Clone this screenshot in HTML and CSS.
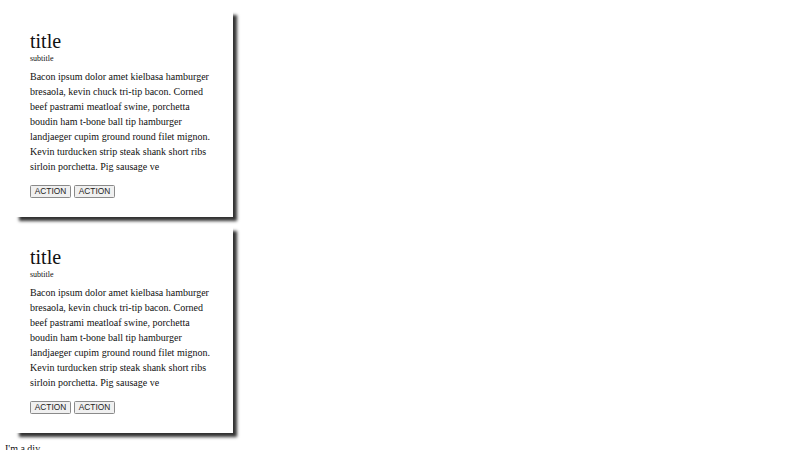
FILE: index.html
```html
<!DOCTYPE html>
<html>
<head>
<meta charset="utf-8">
<link rel="stylesheet" href="styles.css">
</head>
<body>
  <div class="card">
    <h2 class="card-title">title</h2>
    <h6 class="card-subtitle">subtitle</h6>
    <p class="card-text">Bacon ipsum dolor amet kielbasa hamburger bresaola, kevin chuck tri-tip bacon. Corned beef pastrami meatloaf swine, porchetta boudin ham t-bone ball tip hamburger landjaeger cupim ground round filet mignon. Kevin turducken strip steak shank short ribs sirloin porchetta. Pig sausage ve</p>
    <div class="card-actions">
      <button class="btn">ACTION</button>
      <button class="btn">ACTION</button>
    </div>
  </div>
  <div class="card">
    <h2 class="card-title">title</h2>
    <h6 class="card-subtitle">subtitle</h6>
    <p class="card-text">Bacon ipsum dolor amet kielbasa hamburger bresaola, kevin chuck tri-tip bacon. Corned beef pastrami meatloaf swine, porchetta boudin ham t-bone ball tip hamburger landjaeger cupim ground round filet mignon. Kevin turducken strip steak shank short ribs sirloin porchetta. Pig sausage ve</p>
    <div class="card-actions">
      <button class="btn">ACTION</button>
      <button class="btn">ACTION</button>
    </div>
  </div>
  <div class="plain">I'm a div</div>
</body>
</html>
```

FILE: styles.css
```css
html, body {
  background: #ffffff;
}
body {
  margin: 0 5px;
  padding-top: 11px;
  font-family: "Liberation Serif", "Times New Roman", serif;
  font-size: 10px;
  color: #111111;
}
.card {
  width: 187.5px;
  margin: 0 10px 10px;
  padding: 15px 15px 19.5px;
  background: #ffffff;
  box-shadow: 4px 4px 3px rgba(0, 0, 0, 0.8);
}
.card-title {
  margin: 4px 0 0;
  font-size: 20px;
  line-height: 23px;
  font-weight: normal;
}
.card-subtitle {
  margin: 1px 0 0;
  font-size: 8px;
  line-height: 10px;
  font-weight: normal;
}
.card-text {
  margin: 5px 0 0;
  font-size: 10px;
  line-height: 15px;
}
.card-actions {
  display: flex;
  gap: 3px;
  margin-top: 10.5px;
}
.btn {
  font-family: "Liberation Sans", Arial, sans-serif;
  font-size: 8.33px;
  line-height: normal;
  padding: 0.6px 3.75px;
  margin: 0;
  border: 1px solid #8a8a8a;
  border-radius: 1.5px;
  background: #f0f0f0;
  color: #222222;
}
.plain {
  font-size: 10px;
}
```
